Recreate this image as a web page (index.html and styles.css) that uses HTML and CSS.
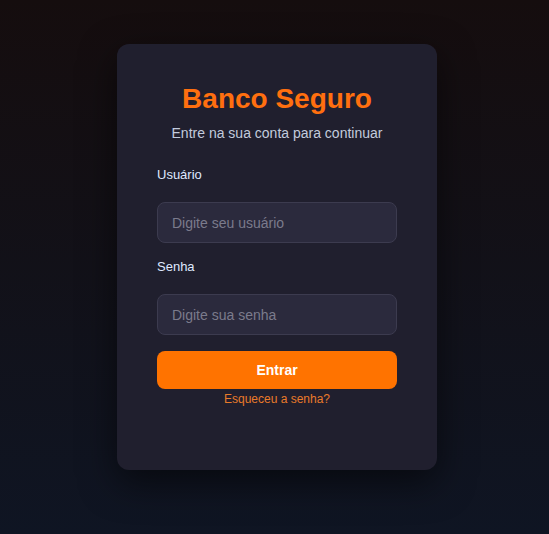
FILE: index.html
```html
<!DOCTYPE html>
<html lang="pt-BR">
<head>
<meta charset="utf-8">
<title>Banco Seguro</title>
<link rel="stylesheet" href="styles.css">
</head>
<body>
<main class="page">
  <form class="card">
    <h1 class="title">Banco Seguro</h1>
    <p class="subtitle">Entre na sua conta para continuar</p>
    <div class="field">
      <label class="label" for="u">Usuário</label>
      <input class="input" id="u" type="text" placeholder="Digite seu usuário">
    </div>
    <div class="field">
      <label class="label" for="p">Senha</label>
      <input class="input" id="p" type="password" placeholder="Digite sua senha">
    </div>
    <button class="button" type="button">Entrar</button>
    <a class="link" href="#">Esqueceu a senha?</a>
  </form>
</main>
</body>
</html>
```

FILE: styles.css
```css
* { box-sizing: border-box; }
html, body { margin: 0; height: 100%; }
body {
  font-family: "Liberation Sans", Arial, sans-serif;
  background: linear-gradient(180deg, #150d0e 0%, #0f1523 100%);
}
.page {
  height: 100%;
  display: flex;
  justify-content: center;
  align-items: flex-start;
  padding: 44px 0 0 5px;
}
.card {
  width: 320px;
  height: 426px;
  background: #201f2e;
  border-radius: 12px;
  padding: 40px;
  box-shadow: 0 12px 36px rgba(0, 0, 0, 0.55);
  display: flex;
  flex-direction: column;
}
.title {
  margin: 0;
  text-align: center;
  font-size: 28px;
  line-height: 30px;
  font-weight: 700;
  color: #ff6f0f;
}
.subtitle {
  margin: 11px 0 24px;
  text-align: center;
  font-size: 14px;
  line-height: 17px;
  color: #c3cbdd;
}
.field {
  display: flex;
  flex-direction: column;
  margin-bottom: 15px;
}
.field + .field { margin-bottom: 16px; }
.label {
  font-size: 13px;
  line-height: 18px;
  color: #dfe8ff;
  margin-bottom: 18px;
}
.input {
  height: 41px;
  padding: 0 14px;
  font-family: inherit;
  font-size: 14px;
  color: #e6e6f0;
  background: #2b2a3d;
  border: 1px solid #3c3b4f;
  border-radius: 8px;
  outline: none;
}
.input::placeholder { color: #7b7b8c; }
.button {
  height: 38px;
  border: none;
  border-radius: 8px;
  background: #ff7300;
  color: #ffffff;
  font-family: inherit;
  font-size: 14px;
  font-weight: 700;
}
.link {
  margin-top: 3px;
  text-align: center;
  font-size: 12px;
  line-height: 14px;
  color: #e97a2a;
  text-decoration: none;
}
```
